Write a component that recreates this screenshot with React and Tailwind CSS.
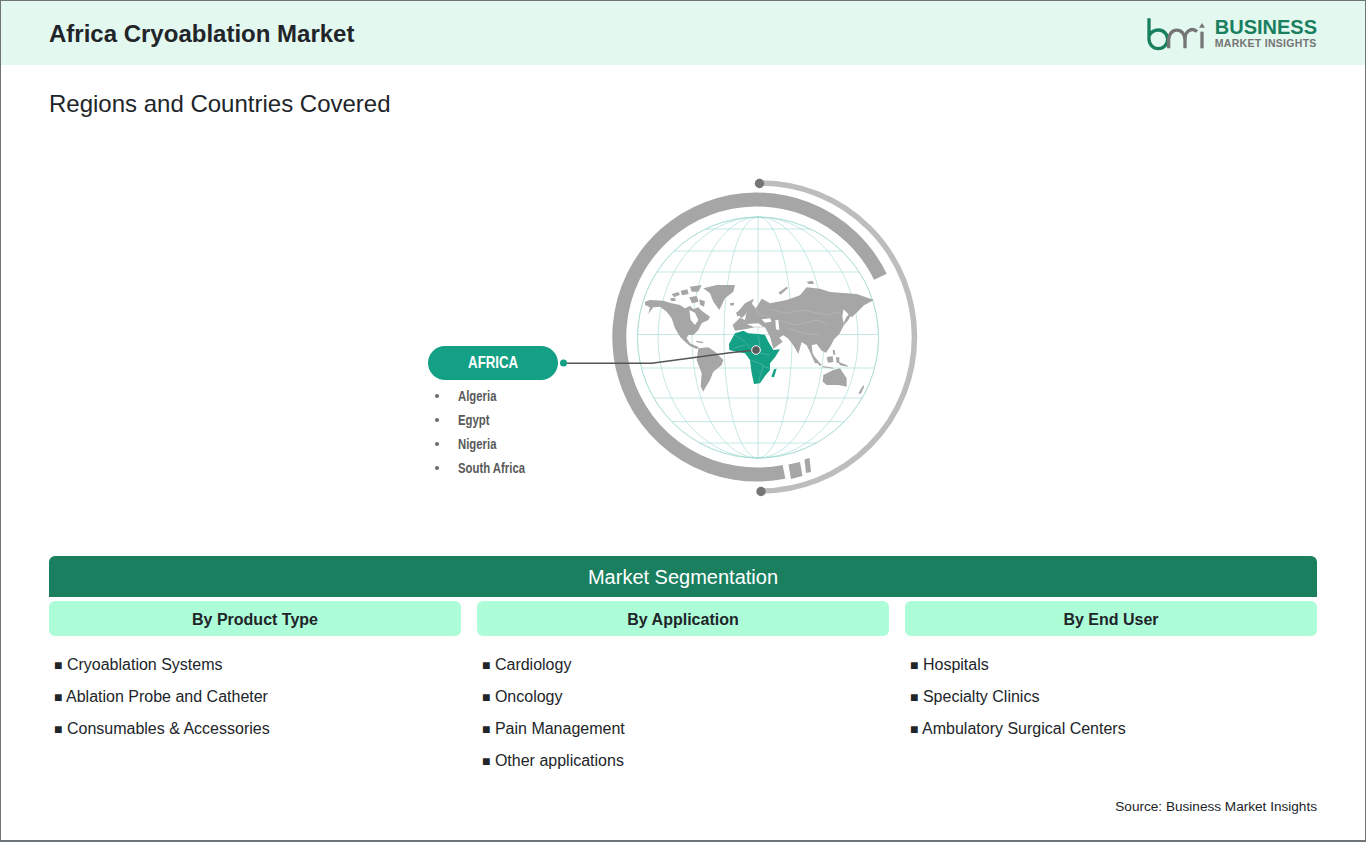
const cx = 758, cy = 337.5, R = 120.5;
const parallels = [229, 251, 272, 334.5, 368, 398, 421.7, 443];
const meridians = [120.5, 100, 66, 34];

const land = [
  // North America
  "45,95 60,90 100,92 125,100 150,105 165,115 180,108 190,118 205,112 215,122 240,140 235,150 215,160 205,180 190,195 175,195 170,205 180,220 207,232 200,237 180,228 165,215 150,200 135,175 125,145 110,125 90,110 70,112 55,132 60,112 45,105",
  // Greenland
  "220,55 260,45 315,45 310,65 285,85 268,120 250,95 240,70",
  // Arctic islands
  "125,72 145,66 150,74 132,82", "152,62 172,58 176,72 156,76", "180,50 215,45 205,65 185,65",
  "178,82 200,78 206,95 186,100", "120,85 135,84 138,92 124,94", "208,88 225,94 222,110 210,104",
  // Caribbean
  "198,212 220,216 218,220 200,217",
  // South America
  "205,235 235,232 255,245 280,270 275,285 250,305 240,330 225,355 220,365 212,350 215,310 200,270",
  // Eurasia
  "378,115 395,86 420,100 470,90 510,76 530,52 570,56 600,66 680,72 732,90 702,106 682,126 665,142 640,118 637,140 642,165 628,192 612,208 602,228 588,248 575,242 560,222 545,226 548,250 565,280 555,280 540,246 530,226 515,216 505,252 490,226 475,206 460,196 448,203 458,215 430,236 420,200 405,172 375,172 345,178 315,182 308,165 330,143 345,150 350,125 363,98",
  // Scandinavia
  "320,130 345,100 372,86 362,110 345,135 335,145",
  // UK, Iceland
  "318,128 328,122 332,134 322,140", "300,100 312,98 312,106 302,107",
  // Novaya Zemlya, Siberian islands
  "445,68 470,50 474,54 452,74", "530,35 548,32 552,42 536,42",
  // Japan
  "650,140 662,125 666,130 655,150 642,165 640,160",
  // Sumatra / Java / Borneo / New Guinea / Philippines
  "555,262 575,285 570,288 552,268", "578,288 610,293 610,296 578,292", "590,262 608,258 610,276 594,278",
  "618,262 628,262 628,280 620,278", "625,275 650,285 655,290 630,286", "608,240 614,240 616,254 610,254",
  // Australia
  "580,315 610,300 630,295 650,325 650,350 625,345 590,345 578,335",
  // New Zealand
  "685,370 700,345 702,352 692,372",
];
const seas = [
  "178,120 195,128 205,150 195,165 182,150",
  "350,162 385,160 400,170 370,170",
  "395,148 420,145 425,155 405,158",
  "436,150 445,150 448,180 438,178",
];
const rivers = [
  "M420 118L470 130L520 120L590 135L630 125",
  "M440 150L500 165L560 150L600 165",
  "M470 175L520 190L570 195",
  "M370 110L390 135L420 140",
];
const africa = [
  "297,222 315,190 340,182 355,190 385,192 405,195 415,215 430,240 450,238 435,262 420,280 420,300 405,318 390,340 372,342 365,310 360,270 345,250 320,245 298,240",
  "432,298 440,296 432,322 424,320",
];
const africaLines = [
  "M315 195L345 215L360 235", "M385 195L392 250L420 255", "M362 270L400 285L385 340", "M310 235L345 225", "M400 290L420 295",
];

function Logo() {
  return (
    <svg width="60" height="35" viewBox="75 45 180 105" className="block shrink-0">
      <path d="M84 52V115A28 28 0 1 0 112 87C100 87 90 93 84 105" fill="none" stroke="#1a7f5f" strokeWidth="10" />
      <path d="M143 142V115A24 27 0 0 1 192 115V142" fill="none" stroke="#757575" strokeWidth="10" />
      <path d="M192 115A22 27 0 0 1 228 92" fill="none" stroke="#757575" strokeWidth="10" />
      <path d="M243 142V92" fill="none" stroke="#757575" strokeWidth="10" />
      <path d="M243 66L252 80H234Z" fill="#757575" />
    </svg>
  );
}

function Globe() {
  return (
    <svg width="372" height="330" viewBox="558 170 372 330" className="block shrink-0">
      <path d="M880.400 276.800A137.500 137.500 0 1 0 784 471.800" fill="none" stroke="#a6a6a6" strokeWidth="14" />
      <path d="M788.500 464.500L800 462L802.500 476L791 479Z" fill="#a6a6a6" />
      <path d="M804.500 459.500L809.500 458L811 472L806 473Z" fill="#a6a6a6" />
      <path d="M760 183A153.500 153.500 0 0 1 761 491" fill="none" stroke="#bdbdbd" strokeWidth="5.500" />
      <circle cx="759.500" cy="183.500" r="4.700" fill="#757575" />
      <circle cx="761" cy="491.500" r="4.700" fill="#757575" />
      <g fill="none" stroke="#9fd8d0" strokeWidth="0.6">
        <circle cx={cx} cy={cy} r={R} />
        <line x1={cx} y1={cy - R} x2={cx} y2={cy + R} />
        {meridians.map((rx) => (
          <ellipse key={rx} cx={cx} cy={cy} rx={rx} ry={R} />
        ))}
        {parallels.map((y) => {
          const half = Math.sqrt(R * R - (y - cy) * (y - cy));
          return <line key={y} x1={cx - half} y1={y} x2={cx + half} y2={y} />;
        })}
      </g>
      <g transform="translate(630 270) scale(0.33333)">
        {land.map((p) => (
          <polygon key={p} points={p} fill="#a6a6a6" />
        ))}
        {seas.map((p) => (
          <polygon key={p} points={p} fill="#ffffff" />
        ))}
        {rivers.map((d) => (
          <path key={d} d={d} fill="none" stroke="#c4c4c4" strokeWidth="1.200" />
        ))}
        {africa.map((p) => (
          <polygon key={p} points={p} fill="#14a085" />
        ))}
        {africaLines.map((d) => (
          <path key={d} d={d} fill="none" stroke="#7fcdbd" strokeWidth="1.200" />
        ))}
      </g>
      <circle cx="563.500" cy="363" r="3.500" fill="#14a085" />
      <path d="M567 363.300H651.700L730 352.700L756 350" fill="none" stroke="#555555" strokeWidth="1.500" />
      <circle cx="756" cy="350" r="4.300" fill="#595959" stroke="#ffffff" strokeWidth="1" />
    </svg>
  );
}

const columns = [
  { title: "By Product Type", items: ["Cryoablation Systems", "Ablation Probe and Catheter", "Consumables & Accessories"] },
  { title: "By Application", items: ["Cardiology", "Oncology", "Pain Management", "Other applications"] },
  { title: "By End User", items: ["Hospitals", "Specialty Clinics", "Ambulatory Surgical Centers"] },
];

export default function App() {
  return (
    <div className="h-[842px] w-[1366px] overflow-hidden border border-b-2 border-[#6f7478] bg-white font-['Liberation_Sans',Arial,sans-serif] text-[#212529]">
      <header className="flex h-[64px] items-center justify-between bg-[#e3f8ef] px-[48px]">
        <h1 className="pt-[2px] text-[24px] font-bold">Africa Cryoablation Market</h1>
        <div className="flex items-center gap-[9px]">
          <Logo />
          <div className="flex flex-col gap-[1px]">
            <span className="text-[20px] leading-[20px] font-bold text-[#1a7f5f]">BUSINESS</span>
            <span className="text-[10.500px] leading-[11px] font-bold tracking-[0.3px] text-[#757575]">MARKET INSIGHTS</span>
          </div>
        </div>
      </header>
      <main className="px-[48px]">
        <h2 className="mt-[21px] text-[24px] leading-[36px]">Regions and Countries Covered</h2>
        <div className="mt-[48px] ml-[379px] flex h-[330px]">
          <div className="w-[130px] shrink-0 pt-[176px]">
            <div className="flex h-[34px] items-center justify-center rounded-[17px] bg-[#14a085] text-white">
              <span className="inline-block scale-x-[0.78] text-[17px] font-bold">AFRICA</span>
            </div>
            <ul className="mt-[4px] text-[14px] font-bold text-[#595959]">
              {["Algeria", "Egypt", "Nigeria", "South Africa"].map((c) => (
                <li key={c} className="flex h-[24px] items-center">
                  <span className="ml-[7px] h-[4px] w-[4px] rounded-full bg-[#6b6b6b]" />
                  <span className="ml-[19px] inline-block origin-left scale-x-[0.81]">{c}</span>
                </li>
              ))}
            </ul>
          </div>
          <Globe />
        </div>
        <section className="mt-[56px]">
          <div className="flex h-[41px] items-center justify-center rounded-t-[6px] bg-[#1a7f5f] text-[20px] text-white">
            Market Segmentation
          </div>
          <div className="mt-[4px] grid grid-cols-3 gap-[16px]">
            {columns.map((col) => (
              <div key={col.title}>
                <div className="flex h-[35px] items-center justify-center rounded-[6px] bg-[#adfdd9] pt-[2px] text-[16px] font-bold">
                  {col.title}
                </div>
                <ul className="mt-[13px] h-[127px] pl-[5px] text-[16px]">
                  {col.items.map((item) => (
                    <li key={item} className="h-[32px] leading-[32px]">
                      <span className="text-[14px]">■</span> {item}
                    </li>
                  ))}
                </ul>
              </div>
            ))}
          </div>
        </section>
        <p className="mt-[21px] text-right text-[13.600px] leading-[20px]">Source: Business Market Insights</p>
      </main>
    </div>
  );
}
